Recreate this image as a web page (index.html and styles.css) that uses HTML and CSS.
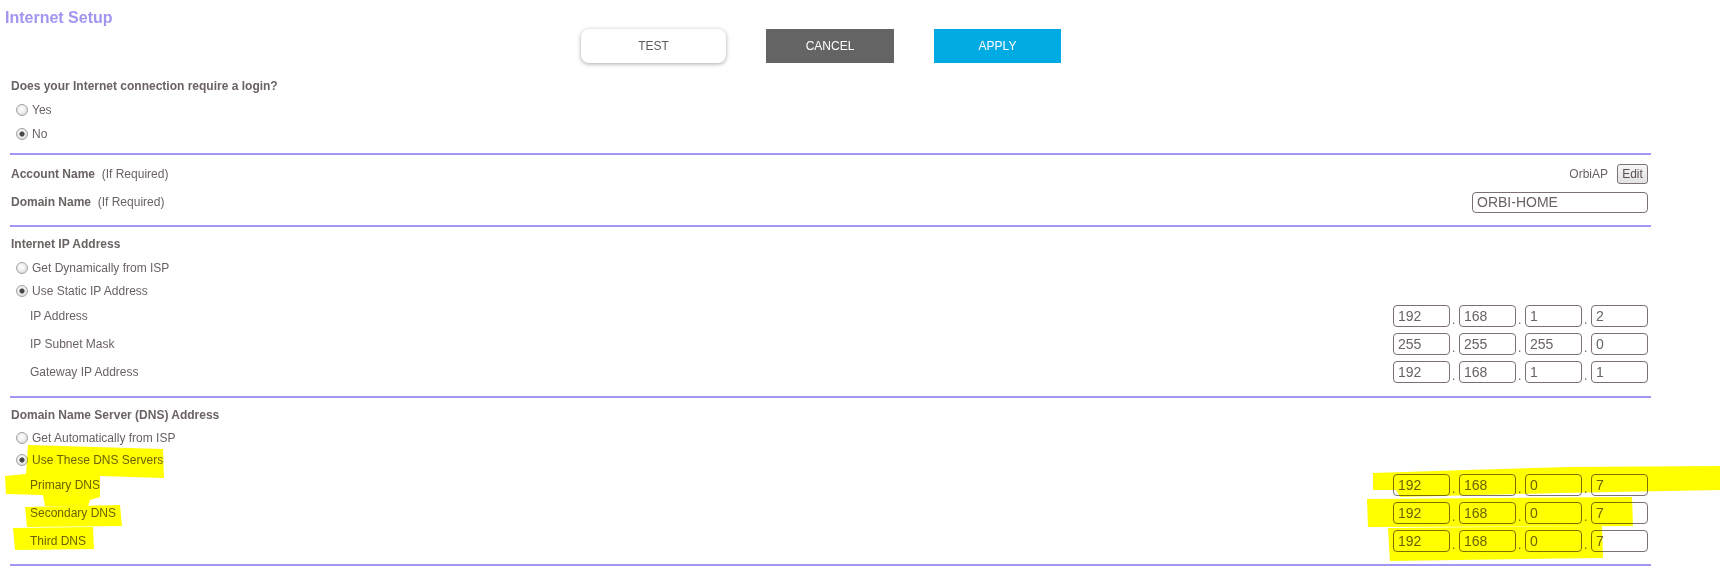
FILE: index.html
```html
<!DOCTYPE html>
<html lang="en">

<head>
    <meta charset="UTF-8">
    <title>Internet Setup</title>
    <link rel="stylesheet" href="styles.css">
</head>

<body>
    <div class="page">
        <h1 class="title">Internet Setup</h1>

        <div class="btns">
            <button class="btn test">TEST</button>
            <button class="btn cancel">CANCEL</button>
            <button class="btn apply">APPLY</button>
        </div>

        <!-- login -->
        <div class="section">
            <div class="row"><b>Does your Internet connection require a login?</b></div>
            <label class="row"><input type="radio" name="login">Yes</label>
            <label class="row"><input type="radio" name="login" checked>No</label>
        </div>

        <!-- account / domain -->
        <div class="section acct">
            <div class="row field">
                <span><b>Account Name</b>&nbsp;&nbsp;(If Required)</span>
                <span class="right">OrbiAP <button class="edit">Edit</button></span>
            </div>
            <div class="row field">
                <span><b>Domain Name</b>&nbsp;&nbsp;(If Required)</span>
                <input class="txt wide" type="text" value="ORBI-HOME">
            </div>
        </div>

        <!-- ip -->
        <div class="section ipsec">
            <div class="row head"><b>Internet IP Address</b></div>
            <label class="row opt"><input type="radio" name="ip">Get Dynamically from ISP</label>
            <label class="row opt"><input type="radio" name="ip" checked>Use Static IP Address</label>
            <div class="row field sub">
                <span>IP Address</span>
                <span class="ip"><input class="txt" value="192"><i>.</i><input class="txt" value="168"><i>.</i><input class="txt" value="1"><i>.</i><input class="txt" value="2"></span>
            </div>
            <div class="row field sub">
                <span>IP Subnet Mask</span>
                <span class="ip"><input class="txt" value="255"><i>.</i><input class="txt" value="255"><i>.</i><input class="txt" value="255"><i>.</i><input class="txt" value="0"></span>
            </div>
            <div class="row field sub">
                <span>Gateway IP Address</span>
                <span class="ip"><input class="txt" value="192"><i>.</i><input class="txt" value="168"><i>.</i><input class="txt" value="1"><i>.</i><input class="txt" value="1"></span>
            </div>
        </div>

        <!-- dns -->
        <div class="section dns">
            <div class="row head"><b>Domain Name Server (DNS) Address</b></div>
            <label class="row opt"><input type="radio" name="dns">Get Automatically from ISP</label>
            <label class="row opt"><input type="radio" name="dns" checked>Use These DNS Servers</label>
            <div class="row field sub">
                <span>Primary DNS</span>
                <span class="ip"><input class="txt" value="192"><i>.</i><input class="txt" value="168"><i>.</i><input class="txt" value="0"><i>.</i><input class="txt" value="7"></span>
            </div>
            <div class="row field sub">
                <span>Secondary DNS</span>
                <span class="ip"><input class="txt" value="192"><i>.</i><input class="txt" value="168"><i>.</i><input class="txt" value="0"><i>.</i><input class="txt" value="7"></span>
            </div>
            <div class="row field sub">
                <span>Third DNS</span>
                <span class="ip"><input class="txt" value="192"><i>.</i><input class="txt" value="168"><i>.</i><input class="txt" value="0"><i>.</i><input class="txt" value="7"></span>
            </div>
        </div>
    </div>

    <!-- highlighter marks drawn over the screenshot -->
    <svg class="marks" width="1720" height="572" viewBox="0 0 1720 572">
        <g fill="#ffff00">
            <polygon points="28,445 163,449 164,478 100,476 100,497 90,500 88,506 45,506 43,495 6,494 5,476 26,474" />
            <polygon points="25,507 120,505 122,526 27,527" />
            <polygon points="13,528 93,527 94,549 15,550" />
            <polygon points="1373,473 1467,470 1570,467 1720,466 1720,490 1560,493 1400,497 1396,490 1373,490" />
            <polygon points="1367,499 1632,497 1633,526 1368,527" />
            <polygon points="1388,528 1602,526 1603,558 1390,561" />
        </g>
    </svg>
</body>

</html>
```

FILE: styles.css
```css
* {
    margin: 0;
    padding: 0;
    box-sizing: border-box;
}

body {
    font-family: "Liberation Sans", Arial, sans-serif;
    font-size: 12px;
    color: #6b6262;
    background: #fff;
}

.page {
    width: 1651px;
    padding-left: 10px;
}

.title {
    height: 29px;
    margin-left: -5px;
    padding-top: 8px;
    font-size: 16px;
    line-height: 20px;
    color: #a096f2;
}

.btns {
    display: flex;
    gap: 40px;
    padding-left: 571px;
    margin-bottom: 11px;
}

.btn {
    height: 34px;
    border: none;
    font-family: inherit;
    font-size: 12px;
    color: #fff;
}

.btn.test {
    width: 145px;
    background: #fff;
    color: #5c5c5c;
    border-radius: 8px;
    box-shadow: 0 1px 4px rgba(0, 0, 0, .35);
}

.btn.cancel {
    width: 128px;
    background: #646464;
}

.btn.apply {
    width: 127px;
    background: #00abe4;
}

.section {
    border-bottom: 2px solid #9f96f5;
    padding: 0 3px 7px 0;
    margin-bottom: 5px;
}

.section.acct {
    padding-bottom: 9px;
}

.section.ipsec {
    padding-bottom: 10px;
}

.section.dns {
    padding-bottom: 9px;
}

.row {
    height: 24px;
    display: flex;
    align-items: center;
    padding-left: 1px;
}

.row.head {
    margin-top: 2px;
}

.row.opt {
    height: 23px;
}

.dns .row.opt {
    height: 22px;
}

.row.field {
    height: 28px;
    justify-content: space-between;
}

.row.sub {
    padding-left: 20px;
}

.row input[type=radio] {
    appearance: none;
    width: 12px;
    height: 12px;
    margin: 0 4px 0 5px;
    border-radius: 50%;
    border: 1px solid #a3a3a3;
    background: radial-gradient(circle at 45% 40%, #fff 0, #f0f0f0 40%, #cfcfcf 100%);
}

.row input[type=radio]:checked {
    background: radial-gradient(circle, #3a3a3a 0, #555 2.2px, transparent 3px),
        radial-gradient(circle at 45% 40%, #fff 0, #f0f0f0 40%, #cfcfcf 100%);
}

.right {
    display: flex;
    align-items: center;
    gap: 9px;
}

.edit {
    height: 20px;
    width: 31px;
    border: 1px solid #7d7272;
    border-radius: 3px;
    background: linear-gradient(#f6f6f6, #e2e2e2);
    font-family: inherit;
    font-size: 12px;
    color: #5a5252;
}

.txt {
    width: 57px;
    height: 22px;
    border: 1px solid #7d7070;
    border-radius: 4px;
    padding-left: 4px;
    font-family: inherit;
    font-size: 14px;
    color: #6b6262;
    background: transparent;
}

.txt.wide {
    width: 176px;
    height: 21px;
}

.ip {
    display: flex;
    align-items: center;
}

.ip i {
    font-style: normal;
    width: 9px;
    padding: 7px 0 0 2px;
    font-size: 12px;
}

.marks {
    position: absolute;
    top: 0;
    left: 0;
    pointer-events: none;
    mix-blend-mode: multiply;
}
```
